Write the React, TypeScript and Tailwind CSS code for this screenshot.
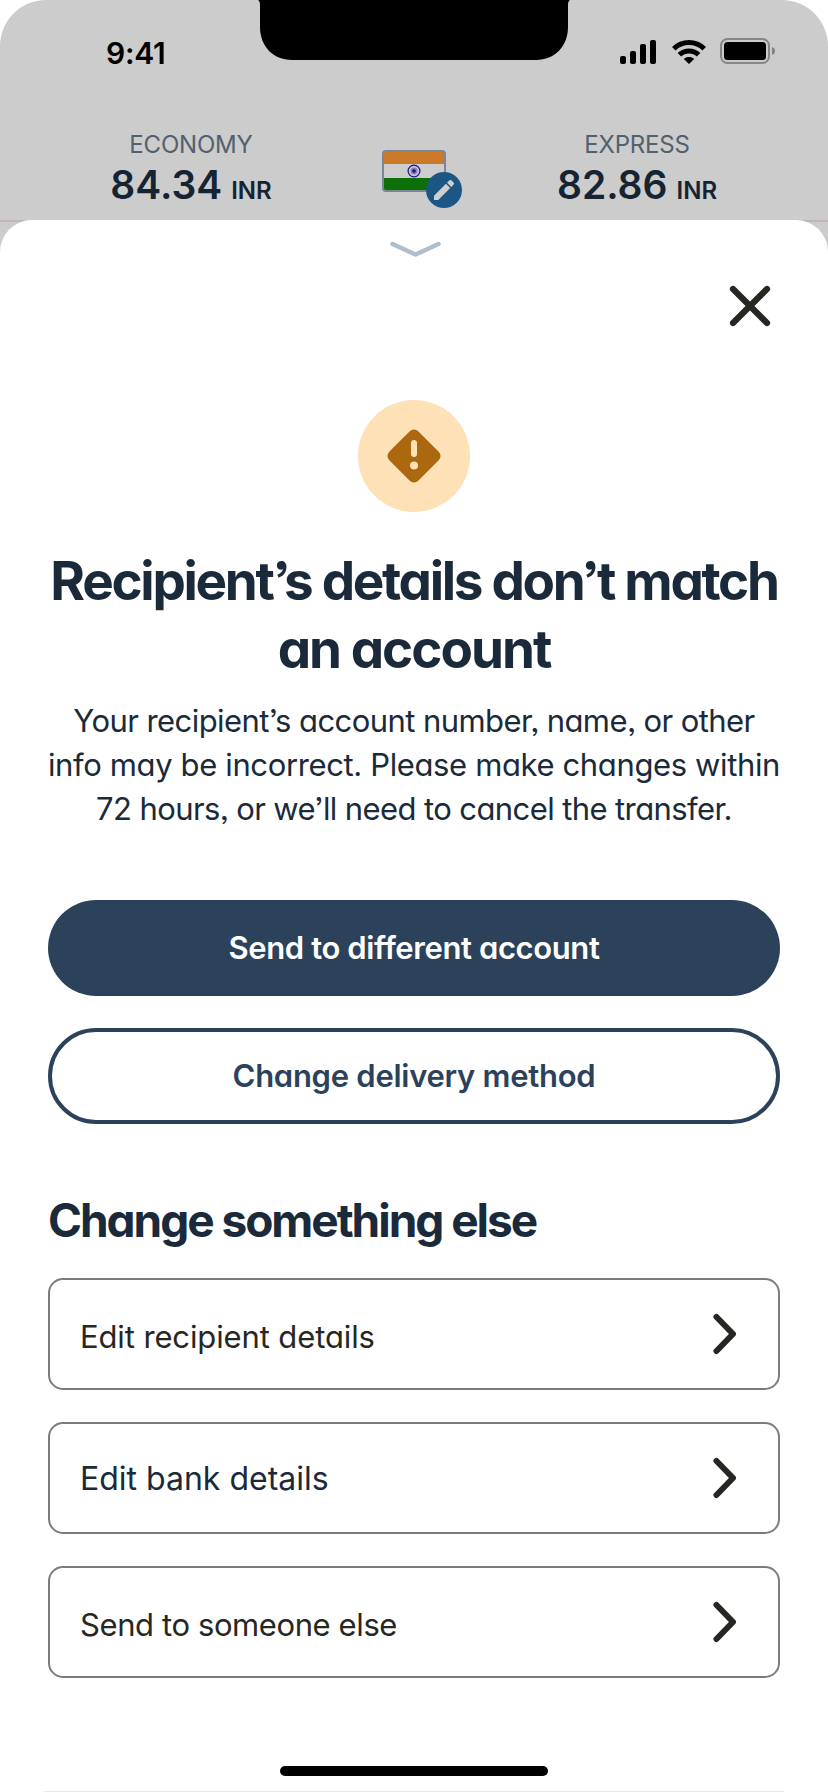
import React from "react";

const geo = "font-['Inter',sans-serif] [font-feature-settings:'cv11','ss03']";

function Notch() {
  return (
    <svg className="absolute left-[258px] top-0" width="312" height="60" viewBox="0 0 312 60">
      <path d="M0 0C1.500 1 2 2.500 2 5V27C2 46 15 60 34 60H278C297 60 310 46 310 27V5C310 2.500 310.500 1 312 0Z" fill="#000" />
    </svg>
  );
}

function StatusBar() {
  return (
    <div className="flex h-[106px] items-center justify-between pl-[106px] pr-[53px]">
      <span className="text-[30px] font-semibold leading-9 tracking-[-0.3px] text-black">9:41</span>
      <div className="flex items-center pb-0.5">
        <svg width="36" height="24" viewBox="0 0 36 24">
          <rect x="0" y="16" width="6" height="8" rx="2" />
          <rect x="10" y="11" width="6" height="13" rx="2" />
          <rect x="20" y="4" width="6" height="20" rx="2" />
          <rect x="30" y="0" width="6" height="24" rx="2" />
        </svg>
        <svg className="ml-4" width="34" height="24" viewBox="0 0 34 24" fill="none" stroke="#000" strokeWidth="5">
          <path d="M1.800 8.800C10 0.400 24 0.400 32.200 8.800" />
          <path d="M7.400 14.800C12.700 9.600 21.300 9.600 26.600 14.800" />
          <path d="M17 24L11.800 18.900C14.800 16.300 19.200 16.300 22.200 18.900Z" fill="#000" stroke="none" />
        </svg>
        <svg className="mb-0.5 ml-3.5" width="55" height="26" viewBox="0 0 55 26">
          <rect x="1" y="1" width="48" height="24" rx="6.500" fill="none" stroke="#868686" strokeWidth="2" />
          <rect x="4" y="4" width="42" height="18" rx="3.500" fill="#000" />
          <path d="M52 9V17C54 16.300 55 14.800 55 13S54 9.700 52 9Z" fill="#808080" />
        </svg>
      </div>
    </div>
  );
}

function Rate({ label, value }: { label: string; value: string }) {
  return (
    <div className="flex w-[240px] flex-col items-center gap-[3px] pt-px">
      <span className="text-[24px] leading-7 tracking-[-0.2px] text-[#52616f]">{label}</span>
      <span className="flex items-baseline gap-[9px] font-semibold leading-[46px] text-[#152433]">
        <span className="text-[39px]">{value}</span>
        <span className="text-[24px]">INR</span>
      </span>
    </div>
  );
}

function Flag() {
  return (
    <div className="relative mt-5 h-[42px] w-16">
      <svg width="64" height="42" viewBox="0 0 64 42">
        <rect x="1" y="1" width="62" height="40" rx="3" fill="#cdcdcd" />
        <path d="M2 2H62V14H2Z" fill="#cc7a29" />
        <path d="M2 28H62V40H2Z" fill="#0d6f07" />
        <rect x="1" y="1" width="62" height="40" rx="3" fill="none" stroke="#7a8896" strokeWidth="2" />
        <circle cx="32" cy="21" r="5.900" fill="#c4c2d4" stroke="#1c1285" strokeWidth="1.200" />
        <circle cx="32" cy="21" r="3.400" fill="#8781b4" />
        <circle cx="32" cy="21" r="1.800" fill="#1c1285" />
      </svg>
      <span className="absolute left-[44px] top-[22px] flex size-9 items-center justify-center rounded-full bg-[#1c5684]">
        <svg width="36" height="36" viewBox="0 0 36 36" fill="#cfcfcf">
          <path d="M8 28V23.700L19.900 11.800L24.200 16.100L12.300 28Z" />
          <path d="M21 10.700L23.200 8.500C23.900 7.800 24.900 7.800 25.600 8.500L27.500 10.400C28.200 11.100 28.200 12.100 27.500 12.800L25.300 15Z" />
        </svg>
      </span>
    </div>
  );
}

function Row({ label, textClass }: { label: string; textClass: string }) {
  return (
    <button className="flex h-28 items-center justify-between rounded-[15px] border-2 border-[#7d7d78] pl-[30px] pr-[42px]">
      <span className={`leading-10 ${textClass}`}>{label}</span>
      <svg width="24" height="44" viewBox="0 0 24 44" fill="none" stroke="#272722" strokeWidth="6" strokeLinecap="round" strokeLinejoin="round">
        <path d="M4.500 5L21 22L4.500 39" />
      </svg>
    </button>
  );
}

export default function App() {
  return (
    <div className="flex h-[1792px] w-[828px] flex-col bg-white font-['Inter',sans-serif]">
      <header className="relative h-[220px] shrink-0 rounded-t-[46px] bg-[#ccc]">
        <Notch />
        <StatusBar />
        <div className="flex justify-center pt-6">
          <Rate label="ECONOMY" value="84.34" />
          <div className="flex w-[206px] justify-center">
            <Flag />
          </div>
          <Rate label="EXPRESS" value="82.86" />
        </div>
      </header>
      <div className="flex grow flex-col border-t-2 border-[#bfb6b1] bg-[linear-gradient(#ccc_0,#ccc_60px,#fff_60px)]">
        <main className="-mt-0.5 flex grow flex-col rounded-t-[32px] bg-white px-12">
          <div className="flex justify-center pl-0.5 pt-[21px]">
            <svg width="54" height="18" viewBox="0 0 54 18" fill="none" stroke="#b0bdcd" strokeWidth="4.500" strokeLinecap="round" strokeLinejoin="round">
              <path d="M4.500 3L27.500 13.500L50.500 3" />
            </svg>
          </div>
          <div className="flex justify-end pr-[7px] pt-[24px]">
            <svg width="46" height="46" viewBox="0 0 46 46" stroke="#272722" strokeWidth="6.200" strokeLinecap="round">
              <path d="M6 6L40 40M40 6L6 40" />
            </svg>
          </div>
          <div className="mt-[71px] flex justify-center">
            <div className="flex size-28 items-center justify-center rounded-full bg-[#fee1b6]">
              <svg width="56" height="56" viewBox="0 0 56 56">
                <rect x="7.500" y="7.500" width="41" height="41" rx="6" transform="rotate(45 28 28)" fill="#ab680e" />
                <rect x="25" y="12" width="6" height="17" rx="3" fill="#fee1b6" />
                <circle cx="28" cy="37.500" r="4" fill="#fee1b6" />
              </svg>
            </div>
          </div>
          <h1 className={`${geo} mt-[35px] flex flex-col items-center whitespace-nowrap text-[53px] font-bold leading-[68px] text-[#1a2a3b]`}>
            <span className="tracking-[-2.3px]">Recipient’s details don’t match</span>
            <span className="tracking-[-2px]">an account</span>
          </h1>
          <p className={`${geo} mt-4 flex flex-col items-center whitespace-nowrap text-[31px] leading-[44px] text-[#1a2a3b]`}>
            <span className="tracking-[-0.57px]">Your recipient’s account number, name, or other</span>
            <span className="tracking-[-0.37px]">info may be incorrect. Please make changes within</span>
            <span className="tracking-[-0.6px]">72 hours, or we’ll need to cancel the transfer.</span>
          </p>
          <div className={`${geo} mt-[69px] flex flex-col gap-8 text-[31px] font-semibold`}>
            <button className="h-24 rounded-full bg-[#2c425b] tracking-[-0.39px] text-white">Send to different account</button>
            <button className="h-24 rounded-full border-4 border-[#2c425b] tracking-[-0.27px] text-[#2c425b]">Change delivery method</button>
          </div>
          <h2 className={`${geo} mt-[68px] text-[46px] font-bold leading-[56px] tracking-[-2.03px] text-[#1a2a3b]`}>Change something else</h2>
          <div className="mt-[30px] flex flex-col gap-8">
            <Row label="Edit recipient details" textClass={`${geo} pt-[5px] text-[31px] tracking-[-0.12px] text-[#272722]`} />
            <Row label="Edit bank details" textClass="pt-px text-[32px] text-[#1a2a3b]" />
            <Row label="Send to someone else" textClass={`${geo} pt-[5px] text-[31px] tracking-[-0.4px] text-[#272722]`} />
          </div>
          <div className="mt-[88px] flex justify-center">
            <div className="h-2.5 w-[268px] rounded-full bg-black" />
          </div>
          <div className="-mx-1 mt-[15px] h-px bg-[#e8e8e8]" />
        </main>
      </div>
    </div>
  );
}
